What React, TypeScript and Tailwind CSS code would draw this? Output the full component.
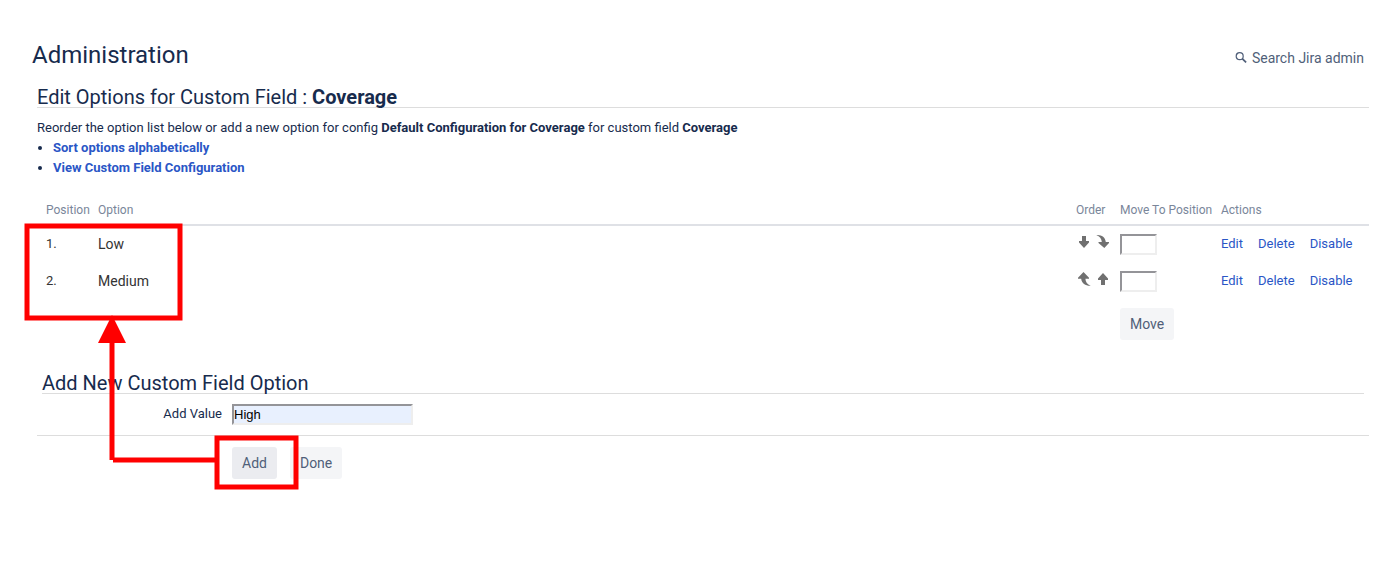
import { useState } from "react";

const ARROWS = {
  down: "M5 1h4v5h3v1.500L7 13 2 7.500V6h3z",
  last: "M.3 0c5-.2 9 2 9.500 7H13v1L8.300 13 2.500 8V7h3.300C5.600 4 3.800 1.200.3 0z",
  first: "M13.700 13.700c-5 .2-9-2-9.500-7H1v-1L6.500 0l5.500 5.700v1H8.400c.2 3 1.800 5.800 5.300 7z",
  up: "M5 13h4V8h3V6.500L7 1 2 6.500V8h3z",
};

type Arrow = keyof typeof ARROWS;

const OPTIONS: { id: number; name: string; moves: { icon: Arrow; label: string }[] }[] = [
  {
    id: 1,
    name: "Low",
    moves: [
      { icon: "down", label: "Move down" },
      { icon: "last", label: "Move to last position" },
    ],
  },
  {
    id: 2,
    name: "Medium",
    moves: [
      { icon: "first", label: "Move to first position" },
      { icon: "up", label: "Move up" },
    ],
  },
];

const FIELD =
  "h-[21px] border-2 border-t-[#949498] border-l-[#949498] border-r-[#eeeeee] border-b-[#eeeeee] outline-none";
const BUTTON = "h-8 rounded-[3px] px-[10px] text-sm text-[#505f79]";
const HEADING = "border-b-2 border-[#dfe1e6] pb-[6px] pl-[9px] font-normal whitespace-nowrap";
const CELL = "pt-2 pl-[9px] align-top";

function Callouts() {
  return (
    <svg
      className="pointer-events-none absolute top-0 left-0"
      width="320"
      height="500"
      fill="none"
      stroke="#ff0000"
      strokeWidth="5"
      aria-hidden="true"
    >
      <rect x="27" y="226" width="153" height="92" />
      <rect x="217" y="438" width="79" height="49" />
      <path d="M217 460H113" />
      <path d="M112 460V340" />
      <path d="M112 315l14 28H98z" fill="#ff0000" stroke="none" />
    </svg>
  );
}

export default function App() {
  const [value, setValue] = useState("High");

  return (
    <div className="relative bg-white pt-10 pb-8 font-[Roboto,sans-serif] text-[13px] leading-5 text-[#172b4d]">
      <header className="flex items-center justify-between pr-[30px] pl-8">
        <h1 className="text-2xl leading-[30px]">Administration</h1>
        <a href="#search" className="mt-[6px] flex items-center gap-[5px] text-sm text-[#505f79]">
          <svg width="12" height="12" viewBox="0 0 12 12" fill="none" stroke="currentColor" aria-hidden="true">
            <circle cx="4.700" cy="4.200" r="3.500" strokeWidth="1.200" />
            <path d="M7.200 6.700l3.900 3.700" strokeWidth="1.800" />
          </svg>
          Search Jira admin
        </a>
      </header>

      <main className="mt-[17px] pr-[25px] pl-[37px]">
        <h2 className="border-b border-[#dddddd] text-xl leading-5">
          Edit Options for Custom Field : <strong>Coverage</strong>
        </h2>
        <p className="mt-[10px]">
          Reorder the option list below or add a new option for config{" "}
          <strong>Default Configuration for Coverage</strong> for custom field <strong>Coverage</strong>
        </p>
        <ul className="list-disc pl-4 font-bold">
          <li>
            <a href="#sort" className="text-[#2a56c6]">Sort options alphabetically</a>
          </li>
          <li>
            <a href="#configuration" className="text-[#2a56c6]">View Custom Field Configuration</a>
          </li>
        </ul>

        <table className="mt-6 w-full table-fixed border-separate border-spacing-0 text-left">
          <thead>
            <tr className="text-xs text-[#7a869a]">
              <th className={`${HEADING} w-[52px]`}>Position</th>
              <th className={HEADING}>Option</th>
              <th className={`${HEADING} w-11`}>Order</th>
              <th className={`${HEADING} w-[101px]`}>Move To Position</th>
              <th className={`${HEADING} w-[157px]`}>Actions</th>
            </tr>
          </thead>
          <tbody>
            {OPTIONS.map((option) => (
              <tr key={option.id} className="h-[37px]">
                <td className={`${CELL} text-[#333333]`}>{option.id}.</td>
                <td className={`${CELL} text-sm text-[#333333]`}>{option.name}</td>
                <td className="pt-[9px] pl-[10px] align-top">
                  <div className="flex gap-[5px]">
                    {option.moves.map((move) => (
                      <button key={move.icon} type="button" aria-label={move.label} className="shrink-0">
                        <svg
                          className="block"
                          width="14"
                          height="14"
                          viewBox="0 0 14 14"
                          fill="#707070"
                          aria-hidden="true"
                        >
                          <path d={ARROWS[move.icon]} />
                        </svg>
                      </button>
                    ))}
                  </div>
                </td>
                <td className={CELL}>
                  <input
                    type="text"
                    aria-label={`New position for ${option.name}`}
                    className={`${FIELD} block w-[37px] bg-white`}
                  />
                </td>
                <td className={CELL}>
                  <div className="flex gap-[15px] text-[#2a56c6]">
                    <a href="#edit">Edit</a>
                    <a href="#delete">Delete</a>
                    <a href="#disable">Disable</a>
                  </div>
                </td>
              </tr>
            ))}
            <tr>
              <td colSpan={3} />
              <td colSpan={2} className="py-2 pl-[9px]">
                <button type="button" className={`${BUTTON} block bg-[#f4f5f7]`}>Move</button>
              </td>
            </tr>
          </tbody>
        </table>

        <form className="mt-[25px]" onSubmit={(event) => event.preventDefault()}>
          <h3 className="mx-[5px] border-b border-[#dddddd] text-xl leading-5">Add New Custom Field Option</h3>
          <div className="flex border-b border-[#dddddd] pt-[10px] pb-[10px]">
            <label htmlFor="add-value" className="w-[185px] text-right">Add Value</label>
            <input
              id="add-value"
              type="text"
              value={value}
              onChange={(event) => setValue(event.target.value)}
              className={`${FIELD} ml-[10px] w-[181px] bg-[#e8f0fe] font-['Liberation_Sans',sans-serif] text-black`}
            />
          </div>
          <div className="mt-[11px] flex gap-[13px] pl-[195px]">
            <button type="submit" className={`${BUTTON} bg-[#ebecf0]`}>Add</button>
            <button type="button" className={`${BUTTON} bg-[#f4f5f7]`}>Done</button>
          </div>
        </form>
      </main>
      <Callouts />
    </div>
  );
}
